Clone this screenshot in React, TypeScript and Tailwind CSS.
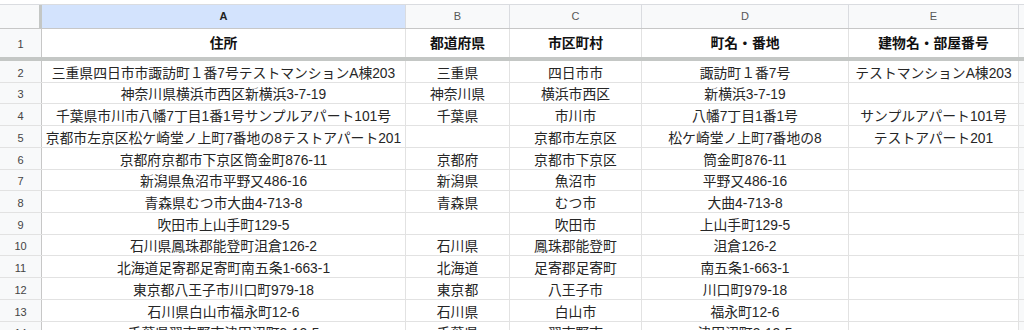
import React from "react";

// column widths in px: A..E (row label is 42px)
const cols = [
  { key: "A", w: "w-[364px]" },
  { key: "B", w: "w-[104px]" },
  { key: "C", w: "w-[132px]" },
  { key: "D", w: "w-[207px]" },
  { key: "E", w: "w-[170px]" },
];

const headers = ["住所", "都道府県", "市区町村", "町名・番地", "建物名・部屋番号"];

const rows: string[][] = [
  ["三重県四日市市諏訪町１番7号テストマンションA棟203", "三重県", "四日市市", "諏訪町１番7号", "テストマンションA棟203"],
  ["神奈川県横浜市西区新横浜3-7-19", "神奈川県", "横浜市西区", "新横浜3-7-19", ""],
  ["千葉県市川市八幡7丁目1番1号サンプルアパート101号", "千葉県", "市川市", "八幡7丁目1番1号", "サンプルアパート101号"],
  ["京都市左京区松ケ崎堂ノ上町7番地の8テストアパート201", "", "京都市左京区", "松ケ崎堂ノ上町7番地の8", "テストアパート201"],
  ["京都府京都市下京区筒金町876-11", "京都府", "京都市下京区", "筒金町876-11", ""],
  ["新潟県魚沼市平野又486-16", "新潟県", "魚沼市", "平野又486-16", ""],
  ["青森県むつ市大曲4-713-8", "青森県", "むつ市", "大曲4-713-8", ""],
  ["吹田市上山手町129-5", "", "吹田市", "上山手町129-5", ""],
  ["石川県鳳珠郡能登町沮倉126-2", "石川県", "鳳珠郡能登町", "沮倉126-2", ""],
  ["北海道足寄郡足寄町南五条1-663-1", "北海道", "足寄郡足寄町", "南五条1-663-1", ""],
  ["東京都八王子市川口町979-18", "東京都", "八王子市", "川口町979-18", ""],
  ["石川県白山市福永町12-6", "石川県", "白山市", "福永町12-6", ""],
  ["千葉県習志野市津田沼町3-12-5", "千葉県", "習志野市", "津田沼町3-12-5", ""],
];

function ColumnHeader() {
  return (
    <div className="flex h-[24px] shrink-0 border-b border-[#c7c7c7]">
      <div className="w-[42px] shrink-0 bg-[#f8f9fa] border-r-[3px] border-[#c4c7c5]" />
      {cols.map((c) => (
        <div
          key={c.key}
          className={`${c.w} shrink-0 flex items-center justify-center text-[11px] border-r border-[#dadce0] ${
            c.key === "A" ? "bg-[#d3e3fd] font-bold text-[#1f1f1f]" : "bg-[#f8f9fa] text-[#575757]"
          }`}
        >
          {c.key}
        </div>
      ))}
      <div className="flex-1 bg-[#f8f9fa]" />
    </div>
  );
}

function TitleRow() {
  return (
    <div className="flex h-[28px] shrink-0">
      <div className="w-[42px] shrink-0 bg-[#f8f9fa] border-r border-[#c7c7c7] flex items-center justify-center pt-[2px] text-[11px] text-[#444]">
        1
      </div>
      {cols.map((c, i) => (
        <div
          key={c.key}
          className={`${c.w} shrink-0 flex items-center justify-center pt-[3px] border-r border-[#e2e2e2] text-[13.8px] font-bold text-[#111]`}
        >
          {headers[i]}
        </div>
      ))}
      <div className="flex-1 bg-[#f8f9fa]" />
    </div>
  );
}

function DataRow({ n, cells }: { n: number; cells: string[] }) {
  return (
    <div className="flex h-[21.73px] shrink-0 border-b border-[#e2e2e2]">
      <div className="w-[42px] shrink-0 bg-[#f8f9fa] border-r border-[#c7c7c7] flex items-end justify-center leading-[18px] text-[11px] text-[#444]">
        {n}
      </div>
      {cols.map((c, i) => (
        <div
          key={c.key}
          className={`${c.w} shrink-0 flex items-end justify-center overflow-hidden whitespace-nowrap leading-[16px] border-r border-[#e2e2e2] text-[13.8px] text-[#262626]`}
        >
          {cells[i]}
        </div>
      ))}
      <div className="flex-1 bg-[#f8f9fa]" />
    </div>
  );
}

export default function App() {
  return (
    <div className="w-[1024px] h-[330px] overflow-hidden bg-white font-['Liberation_Sans','Noto_Sans_CJK_JP',sans-serif]">
      {/* strip above the grid */}
      <div className="h-[5px] bg-white border-b border-[#dadce0]" />
      <ColumnHeader />
      <TitleRow />
      {/* frozen row divider */}
      <div className="h-[4px] bg-[#c4c7c5]" />
      {rows.map((r, i) => (
        <DataRow key={i} n={i + 2} cells={r} />
      ))}
    </div>
  );
}
